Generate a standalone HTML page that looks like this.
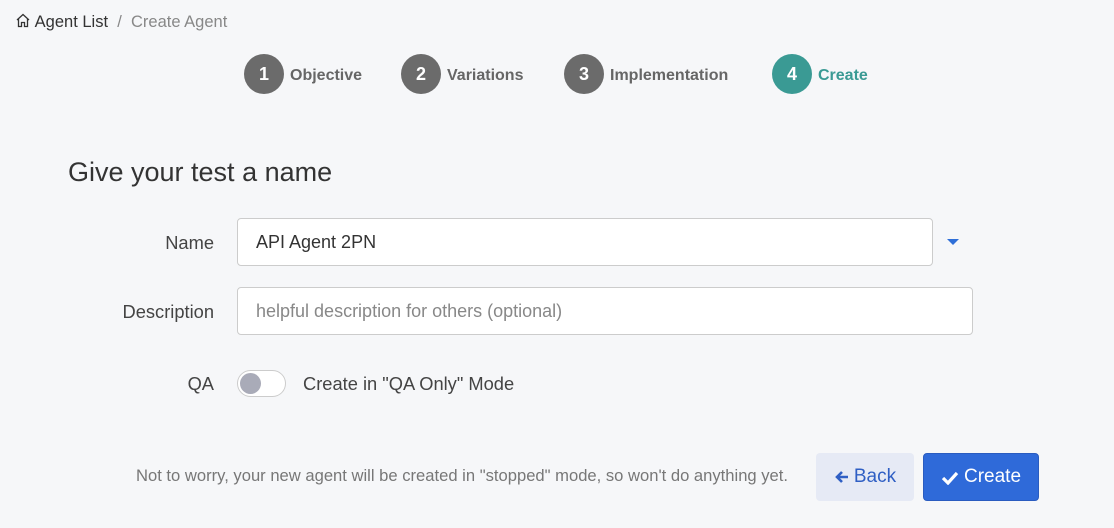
<!DOCTYPE html>
<html><head><style>
body{margin:0;width:1114px;height:528px;background:#f6f7f9;font-family:"Liberation Sans",sans-serif;position:relative;overflow:hidden;color:#333}
.abs{position:absolute}
.crumb{left:15px;top:13px;font-size:16.5px;color:#333}
.crumb .g{color:#888}
.step{top:54px;height:40px;display:flex;align-items:center;font-size:16px;font-weight:bold;color:#666}
.step span{position:relative;top:2px}
.circ{width:40px;height:40px;border-radius:50%;background:#6b6b6b;color:#fff;display:flex;align-items:center;justify-content:center;font-size:18px;margin-right:6px}
h1{position:absolute;left:68px;top:157px;margin:0;font-size:27px;font-weight:normal;color:#333}
.lbl{font-size:18.3px;color:#444;text-align:right;width:200px;left:14px}
.inp{background:#fff;border:1px solid #ccc;border-radius:4px;height:46px;box-sizing:border-box;padding:0 18px;display:flex;align-items:center;font-size:18px}
.btn{top:453px;height:48px;border-radius:4px;display:flex;align-items:center;justify-content:center;font-size:19px}
</style></head><body>
<div class="abs crumb"><svg width="16" height="15" viewBox="0 0 16 15" style="vertical-align:-1px"><path d="M2 7L8 1.5 14 7M3.5 6V13.5H6.5V9.5H9.5V13.5H12.5V6" fill="none" stroke="#333" stroke-width="1.3"/></svg> Agent List <span class="g">&nbsp;/&nbsp; Create Agent</span></div>
<div class="abs step" style="left:244px"><div class="circ">1</div><span>Objective</span></div>
<div class="abs step" style="left:401px"><div class="circ">2</div><span>Variations</span></div>
<div class="abs step" style="left:564px"><div class="circ">3</div><span>Implementation</span></div>
<div class="abs step" style="left:772px;color:#3a9a94"><div class="circ" style="background:#3a9a94">4</div><span>Create</span></div>
<h1>Give your test a name</h1>
<div class="abs lbl" style="top:232px">Name</div>
<div class="abs inp" style="left:237px;top:218px;width:696px;height:48px;color:#333">API Agent 2PN</div>
<svg class="abs" style="left:947px;top:238px" width="12" height="8"><path d="M0 1L12 1 6 7z" fill="#2f6fd8"/></svg>
<div class="abs lbl" style="top:301px">Description</div>
<div class="abs inp" style="left:237px;top:287px;width:736px;height:48px;color:#888">helpful description for others (optional)</div>
<div class="abs lbl" style="top:373px">QA</div>
<div class="abs" style="left:237px;top:370px;width:49px;height:27px;border:1px solid #ccc;border-radius:14px;background:#fff;box-sizing:border-box"><div style="position:absolute;left:2px;top:2px;width:21px;height:21px;border-radius:50%;background:#a9abb8"></div></div>
<div class="abs" style="left:303px;top:373px;font-size:18.3px;color:#444">Create in "QA Only" Mode</div>
<div class="abs" style="left:136px;top:466px;font-size:16.6px;color:#777">Not to worry, your new agent will be created in "stopped" mode, so won't do anything yet.</div>
<div class="abs btn" style="left:816px;width:98px;background:#e6eaf5;color:#2f5fc4"><svg width="16" height="16" viewBox="0 0 16 16" style="margin-right:4px"><path d="M14 8H3M8 3L3 8 8 13" fill="none" stroke="#2f5fc4" stroke-width="2.6"/></svg>Back</div>
<div class="abs btn" style="left:923px;width:116px;background:#2f6ad9;color:#fff;border:1px solid #2a5cc0;box-sizing:border-box"><svg width="18" height="15" viewBox="0 0 18 15" style="margin-right:5px"><path d="M2 8L7 13 16 3" fill="none" stroke="#fff" stroke-width="3.2"/></svg>Create</div>
</body></html>
